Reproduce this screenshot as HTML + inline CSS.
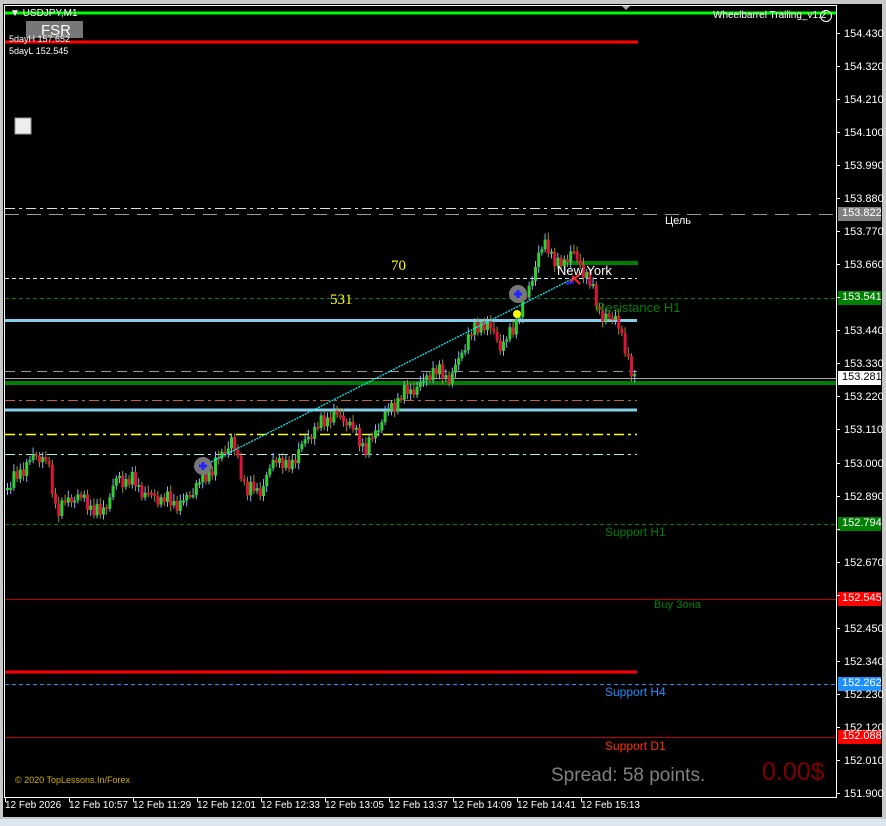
<!DOCTYPE html>
<html><head><meta charset="utf-8"><style>
html,body{margin:0;padding:0;background:#000;}
body{width:886px;height:826px;position:relative;overflow:hidden;font-family:"Liberation Sans","DejaVu Sans",sans-serif;}
.t{position:absolute;white-space:nowrap;line-height:1;}
</style></head><body>
<svg id="s" width="886" height="826" style="position:absolute;left:0;top:0" xmlns="http://www.w3.org/2000/svg">
<rect x="0" y="0" width="886" height="826" fill="#000"/>
<rect x="0" y="0" width="886" height="4" fill="#c8c8c8"/>
<rect x="0" y="0" width="3" height="826" fill="#c8c8c8"/>
<rect x="882" y="0" width="4" height="826" fill="#c8c8c8"/>
<rect x="0" y="819" width="886" height="7" fill="#dde6ef"/>
<rect x="3" y="817" width="879" height="2" fill="#c8c8c8"/>
<line x1="4.5" y1="6" x2="4.5" y2="797" stroke="#fff"/>
<line x1="4" y1="5.5" x2="837" y2="5.5" stroke="#fff"/>
<line x1="836.5" y1="6" x2="836.5" y2="797" stroke="#fff"/>
<line x1="4" y1="797.5" x2="837" y2="797.5" stroke="#fff"/>
<polygon points="622,6 630,6 626,10" fill="#aaa"/>
<g id="lines">
<line x1="5" y1="13" x2="836" y2="13" stroke="#00ff00" stroke-width="3"/>
<line x1="5" y1="42" x2="638" y2="42" stroke="#ff0000" stroke-width="3"/>
<line x1="5" y1="208.5" x2="637" y2="208.5" stroke="#ddd" stroke-dasharray="10,4,3,4"/>
<line x1="5" y1="214.5" x2="836" y2="214.5" stroke="#999" stroke-dasharray="14,8"/>
<line x1="560" y1="263" x2="638" y2="263" stroke="#008000" stroke-width="4"/>
<line x1="5" y1="278.5" x2="637" y2="278.5" stroke="#cfe6ff" stroke-dasharray="4,3"/>
<line x1="5" y1="298.5" x2="836" y2="298.5" stroke="#008000" stroke-dasharray="4,3"/>
<line x1="5" y1="320.5" x2="637" y2="320.5" stroke="#87ceeb" stroke-width="3"/>
<line x1="5" y1="371.5" x2="637" y2="371.5" stroke="#999" stroke-dasharray="10,6"/>
<line x1="5" y1="378.5" x2="836" y2="378.5" stroke="#aaa"/>
<line x1="5" y1="383" x2="836" y2="383" stroke="#008000" stroke-width="4"/>
<line x1="5" y1="400.5" x2="637" y2="400.5" stroke="#c8603a" stroke-dasharray="10,4,3,4"/>
<line x1="5" y1="410" x2="637" y2="410" stroke="#87ceeb" stroke-width="3"/>
<line x1="5" y1="434.5" x2="637" y2="434.5" stroke="#ffff00" stroke-width="1.5" stroke-dasharray="10,4,3,4"/>
<line x1="5" y1="454.5" x2="637" y2="454.5" stroke="#aee" stroke-dasharray="10,4,3,4"/>
<line x1="5" y1="524.5" x2="836" y2="524.5" stroke="#008000" stroke-dasharray="4,3"/>
<line x1="5" y1="599.5" x2="836" y2="599.5" stroke="#c00000"/>
<line x1="5" y1="672" x2="637" y2="672" stroke="#ff0000" stroke-width="3"/>
<line x1="5" y1="684.5" x2="836" y2="684.5" stroke="#1e90ff" stroke-dasharray="4,3"/>
<line x1="5" y1="737.5" x2="836" y2="737.5" stroke="#c00000"/>
</g>
<g id="c"></g>
<line x1="203" y1="466" x2="580" y2="275" stroke="#00ffff" stroke-width="1.2" stroke-dasharray="2,1"/>
<circle cx="203" cy="466" r="9" fill="#777"/><path d="M199 466h8M203 462v8" stroke="#22f" stroke-width="3"/>
<circle cx="518" cy="294" r="9" fill="#777"/><path d="M514 294h8M518 290v8" stroke="#22f" stroke-width="3"/>
<circle cx="517" cy="314" r="4" fill="#ffff00"/>
<path d="M570 282l10-8M572 276l8 8" stroke="#f22" stroke-width="2"/>
<path d="M566 284l8-2" stroke="#22f" stroke-width="2"/>
<rect x="838" y="207" width="43" height="14" fill="#808080"/>
<rect x="838" y="291" width="43" height="14" fill="#008000"/>
<rect x="838" y="371" width="43" height="14" fill="#fff"/>
<rect x="838" y="517" width="43" height="14" fill="#008000"/>
<rect x="838" y="592" width="43" height="14" fill="#ff0000"/>
<rect x="838" y="677" width="43" height="14" fill="#1e90ff"/>
<rect x="838" y="730" width="43" height="14" fill="#ff0000"/>
<rect x="26" y="21" width="57" height="17" fill="#777"/>
<rect x="15" y="118" width="16" height="16" fill="#eee" stroke="#999"/>
<circle cx="826" cy="16" r="5.5" fill="none" stroke="#fff"/>
</svg>
<div class="t" style="left:10px;top:9px;font-size:10px;color:#fff">▼ USDJPY,M1</div>
<div class="t" style="left:41px;top:23px;font-size:15px;color:#fff">FSR</div>
<div class="t" style="left:9px;top:35px;font-size:9px;color:#fff">5dayH 157.652</div>
<div class="t" style="left:9px;top:47px;font-size:9px;color:#fff">5dayL 152.545</div>
<div class="t" style="left:713px;top:11px;font-size:10px;color:#fff">Wheelbarrel Trailing_v1.2</div>
<div class="t" style="left:665px;top:216px;font-size:11px;color:#fff">Цель</div>
<div class="t" style="left:391px;top:259px;font-size:15px;color:#ff0;font-family:'Liberation Serif',serif">70</div>
<div class="t" style="left:330px;top:293px;font-size:15px;color:#ff0;font-family:'Liberation Serif',serif">531</div>
<div class="t" style="left:557px;top:264px;font-size:13px;color:#fff">New York</div>
<div class="t" style="left:596px;top:301px;font-size:13px;color:#008000">Resistance H1</div>
<div class="t" style="left:605px;top:526px;font-size:12px;color:#008000">Support H1</div>
<div class="t" style="left:654px;top:600px;font-size:11px;color:#008000">Buy Зона</div>
<div class="t" style="left:605px;top:686px;font-size:12px;color:#1e90ff">Support H4</div>
<div class="t" style="left:605px;top:740px;font-size:12px;color:#ff3000">Support D1</div>
<div class="t" style="left:551px;top:766px;font-size:19px;color:#808080">Spread: 58 points.</div>
<div class="t" style="left:762px;top:760px;font-size:25px;color:#800000">0.00$</div>
<div class="t" style="left:15px;top:776px;font-size:9px;color:#d4b000">© 2020 TopLessons.In/Forex</div>
<div id="ax"></div>
<script>
var ax=document.getElementById('ax'),h='';
var hide={'153.550':1,'152.780':1,'152.560':1};
for(var i=0;i<24;i++){var p=(154.430-i*0.11).toFixed(3);var y=33+i*33.04;
if(!hide[p])h+='<div class="t" style="left:844px;top:'+(y-4)+'px;font-size:11px;color:#fff">'+p+'</div>';
h+='<div style="position:absolute;left:836px;top:'+Math.round(y)+'px;width:4px;height:1px;background:#fff"></div>';}
var L=[[207,'153.822','#fff'],[291,'153.541','#fff'],[371,'153.281','#000'],[517,'152.794','#fff'],[592,'152.545','#fff'],[677,'152.262','#fff'],[730,'152.088','#fff']];
L.forEach(function(l){h+='<div class="t" style="left:842px;top:'+(l[0]+1)+'px;font-size:11px;color:'+l[2]+'">'+l[1]+'</div>';});
var tl=['12 Feb 2026','12 Feb 10:57','12 Feb 11:29','12 Feb 12:01','12 Feb 12:33','12 Feb 13:05','12 Feb 13:37','12 Feb 14:09','12 Feb 14:41','12 Feb 15:13'];
tl.forEach(function(t,i){var x=5+i*64;h+='<div class="t" style="left:'+x+'px;top:801px;font-size:10px;color:#fff">'+t+'</div><div style="position:absolute;left:'+x+'px;top:797px;width:1px;height:5px;background:#fff"></div>';});
ax.innerHTML=h;
var K=[[5,490],[20,470],[35,455],[45,460],[55,510],[75,495],[100,515],[115,480],[130,480],[145,495],[165,500],[180,505],[195,485],[210,470],[230,440],[245,490],[260,490],[275,455],[285,470],[310,432],[330,415],[345,420],[365,450],[380,420],[400,395],[420,385],[430,370],[450,378],[465,340],[480,322],[495,335],[500,350],[515,320],[525,295],[535,262],[545,240],[555,268],[570,252],[585,275],[600,315],[610,322],[615,312],[625,360],[635,378]];
function f(x){for(var i=0;i<K.length-1;i++){if(x<=K[i+1][0]){var a=K[i],b=K[i+1];return a[1]+(b[1]-a[1])*(x-a[0])/(b[0]-a[0]);}}return 378;}
var g='',prev=f(5);
for(var x=6;x<=634;x+=3.2){var c=f(x)+Math.sin(x*0.9)*5+Math.sin(x*0.37)*4;var o=prev;var up=c<o;var hi=Math.min(o,c)-3-(Math.round(x)*7%5),lo=Math.max(o,c)+3+(Math.round(x)*3%4);
g+='<line x1="'+(x+1.5)+'" y1="'+hi+'" x2="'+(x+1.5)+'" y2="'+lo+'" stroke="'+(up?'#8ab4f8':'#a09020')+'"/>';
g+='<rect x="'+x+'" y="'+Math.min(o,c)+'" width="3" height="'+Math.max(2,Math.abs(c-o))+'" fill="'+(up?'#32cd32':'#dc143c')+'"/>';prev=c;}
document.getElementById('c').innerHTML=g;
</script>
</body></html>
